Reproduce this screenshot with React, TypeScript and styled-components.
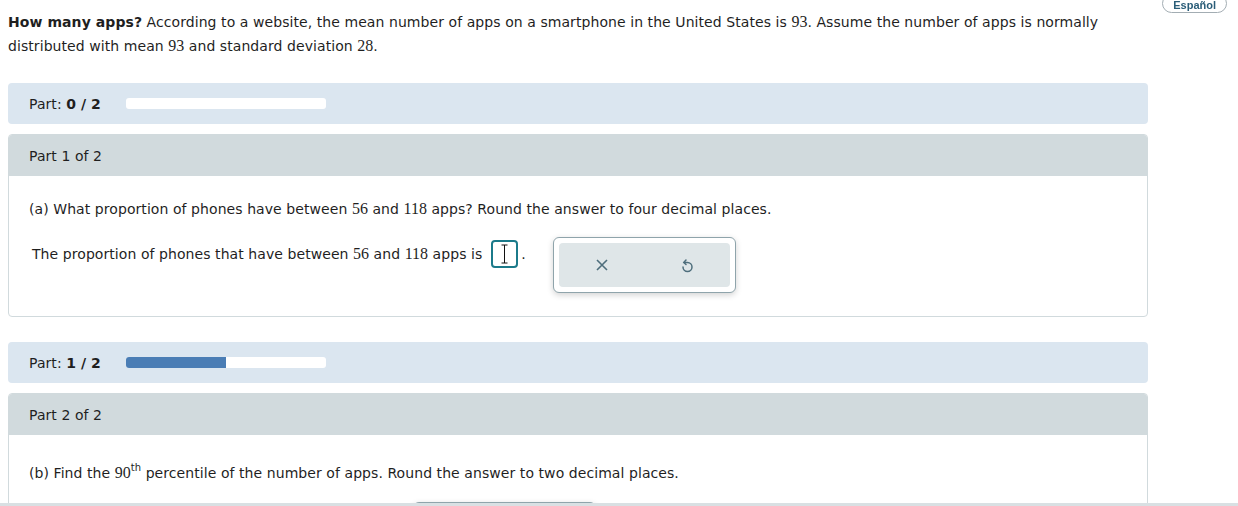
import styled, { createGlobalStyle } from 'styled-components';

const GlobalStyle = createGlobalStyle`
  html, body {
    margin: 0;
    padding: 0;
    overflow: hidden;
    background: #fff;
  }
  body {
    font-family: 'DejaVu Sans', Verdana, sans-serif;
    font-size: 14px;
    letter-spacing: 0.07px;
    color: #1f1f1f;
  }
`;

const Page = styled.div`
  position: relative;
  width: 1140px;
  padding: 10px 8px 0;
`;

const LangButton = styled.button`
  position: fixed;
  top: -6px;
  right: 11px;
  padding: 4px 10px 1px;
  border: 1px solid #a3adb3;
  border-radius: 10px;
  background: #fff;
  color: #2a5d78;
  font-family: 'Liberation Sans', Arial, sans-serif;
  font-weight: 700;
  font-size: 11px;
`;

const Intro = styled.p`
  margin: 0;
  line-height: 24px;
`;

const Num = styled.span`
  font-family: 'Liberation Serif', 'Times New Roman', serif;
  font-size: 16px;
  letter-spacing: 0;
`;

const Sup = styled.sup`
  font-size: 10px;
  line-height: 0;
  vertical-align: 7px;
`;

const Banner = styled.div`
  display: flex;
  align-items: center;
  height: 41px;
  margin-top: 25px;
  padding: 0 21px;
  background: #dbe6f0;
  border-radius: 4px;
`;

const Track = styled.div`
  width: 200px;
  height: 11px;
  margin-left: 25px;
  background: #fff;
  border-radius: 3px;
  overflow: hidden;
`;

const Fill = styled.div`
  height: 100%;
  background: #4a7db5;
`;

const Card = styled.section`
  margin-top: 10px;
  border: 1px solid #d1dadd;
  border-radius: 4px;
  background: #fff;
  overflow: hidden;
`;

const CardHead = styled.div`
  display: flex;
  align-items: center;
  height: 41px;
  padding: 0 20px;
  background: #d1dadd;
`;

const CardBody = styled.div`
  padding: 21px 20px 23px;
`;

const Question = styled.p<{ $top?: number }>`
  margin: ${({ $top }) => $top ?? 0}px 0 0;
  line-height: 24px;
`;

const AnswerRow = styled.div<{ $top: number }>`
  display: flex;
  align-items: flex-start;
  margin-top: ${({ $top }) => $top}px;
  padding-left: 3px;
`;

const AnswerText = styled.span`
  display: flex;
  align-items: center;
  height: 28px;
`;

const InputBox = styled.span`
  display: inline-flex;
  align-items: center;
  justify-content: center;
  box-sizing: border-box;
  width: 27px;
  height: 28px;
  margin: 0 3px 0 9px;
  border: 2px solid #1b7a8a;
  border-radius: 4px;
`;

const Popup = styled.div<{ $left: number }>`
  box-sizing: border-box;
  width: 183px;
  height: 56px;
  margin: -3px 0 0 ${({ $left }) => $left}px;
  padding: 5px;
  border: 1px solid #8fa4ab;
  border-radius: 6px;
  background: #fff;
  box-shadow: 0 2px 6px rgba(0, 0, 0, 0.18);
`;

const ToolBar = styled.div`
  display: grid;
  grid-template-columns: 1fr 1fr;
  height: 100%;
  background: #dfe6e8;
  border-radius: 4px;
`;

const ToolButton = styled.button`
  display: flex;
  align-items: center;
  justify-content: center;
  border: 0;
  padding: 0;
  background: transparent;
  color: #4e6e7c;
`;

const BottomBar = styled.div`
  position: fixed;
  left: 0;
  right: 0;
  bottom: 0;
  height: 3px;
  background: #d9e0e3;
`;

function Cursor() {
  return (
    <svg width="9" height="20" viewBox="0 0 9 20">
      <path d="M1.5 1h6M4.5 1v18M1.5 19h6" stroke="#111" strokeWidth="1" fill="none" />
    </svg>
  );
}

function CloseIcon() {
  return (
    <svg width="14" height="14" viewBox="0 0 14 14">
      <path d="M2 2l10 10M12 2L2 12" stroke="currentColor" strokeWidth="1.6" fill="none" />
    </svg>
  );
}

function UndoIcon() {
  return (
    <svg width="14" height="17" viewBox="0 0 14 17">
      <path
        d="M4 5.5h3.5a4.5 4.5 0 1 1 -4.5 4.5"
        stroke="currentColor"
        strokeWidth="1.5"
        fill="none"
        strokeLinecap="round"
      />
      <path d="M6 3L3.8 5.5 6 7.5" stroke="currentColor" strokeWidth="1.5" fill="none" strokeLinecap="round" />
    </svg>
  );
}

function Tools({ left }: { left: number }) {
  return (
    <Popup $left={left}>
      <ToolBar>
        <ToolButton aria-label="clear">
          <CloseIcon />
        </ToolButton>
        <ToolButton aria-label="undo">
          <UndoIcon />
        </ToolButton>
      </ToolBar>
    </Popup>
  );
}

function Progress({ done }: { done: number }) {
  return (
    <Banner>
      <span>
        Part: <b>{done} / 2</b>
      </span>
      <Track>
        <Fill style={{ width: `${(done / 2) * 100}%` }} />
      </Track>
    </Banner>
  );
}

export default function App() {
  return (
    <>
      <GlobalStyle />
      <LangButton>Español</LangButton>
      <Page>
        <Intro>
          <b>How many apps?</b> According to a website, the mean number of apps on a smartphone in the
          United States is <Num>93</Num>. Assume the number of apps is normally distributed with mean{' '}
          <Num>93</Num> and standard deviation <Num>28</Num>.
        </Intro>

        <Progress done={0} />

        <Card>
          <CardHead>Part 1 of 2</CardHead>
          <CardBody>
            <Question>
              (a) What proportion of phones have between <Num>56</Num> and <Num>118</Num> apps? Round
              the answer to four decimal places.
            </Question>
            <AnswerRow $top={19}>
              <AnswerText>
                The proportion of phones that have between&nbsp;<Num>56</Num>&nbsp;and&nbsp;
                <Num>118</Num>&nbsp;apps is
                <InputBox>
                  <Cursor />
                </InputBox>
                .
              </AnswerText>
              <Tools left={27} />
            </AnswerRow>
          </CardBody>
        </Card>

        <Progress done={1} />

        <Card>
          <CardHead>Part 2 of 2</CardHead>
          <CardBody>
            <Question $top={5}>
              (b) Find the <Num>90</Num>
              <Sup>th</Sup> percentile of the number of apps. Round the answer to two decimal places.
            </Question>
            <AnswerRow $top={20}>
              <AnswerText>
                The&nbsp;<Num>90</Num>
                <Sup>th</Sup>&nbsp;percentile of the number of apps is
                <InputBox />.
              </AnswerText>
              <Tools left={27} />
            </AnswerRow>
          </CardBody>
        </Card>
      </Page>
      <BottomBar />
    </>
  );
}
